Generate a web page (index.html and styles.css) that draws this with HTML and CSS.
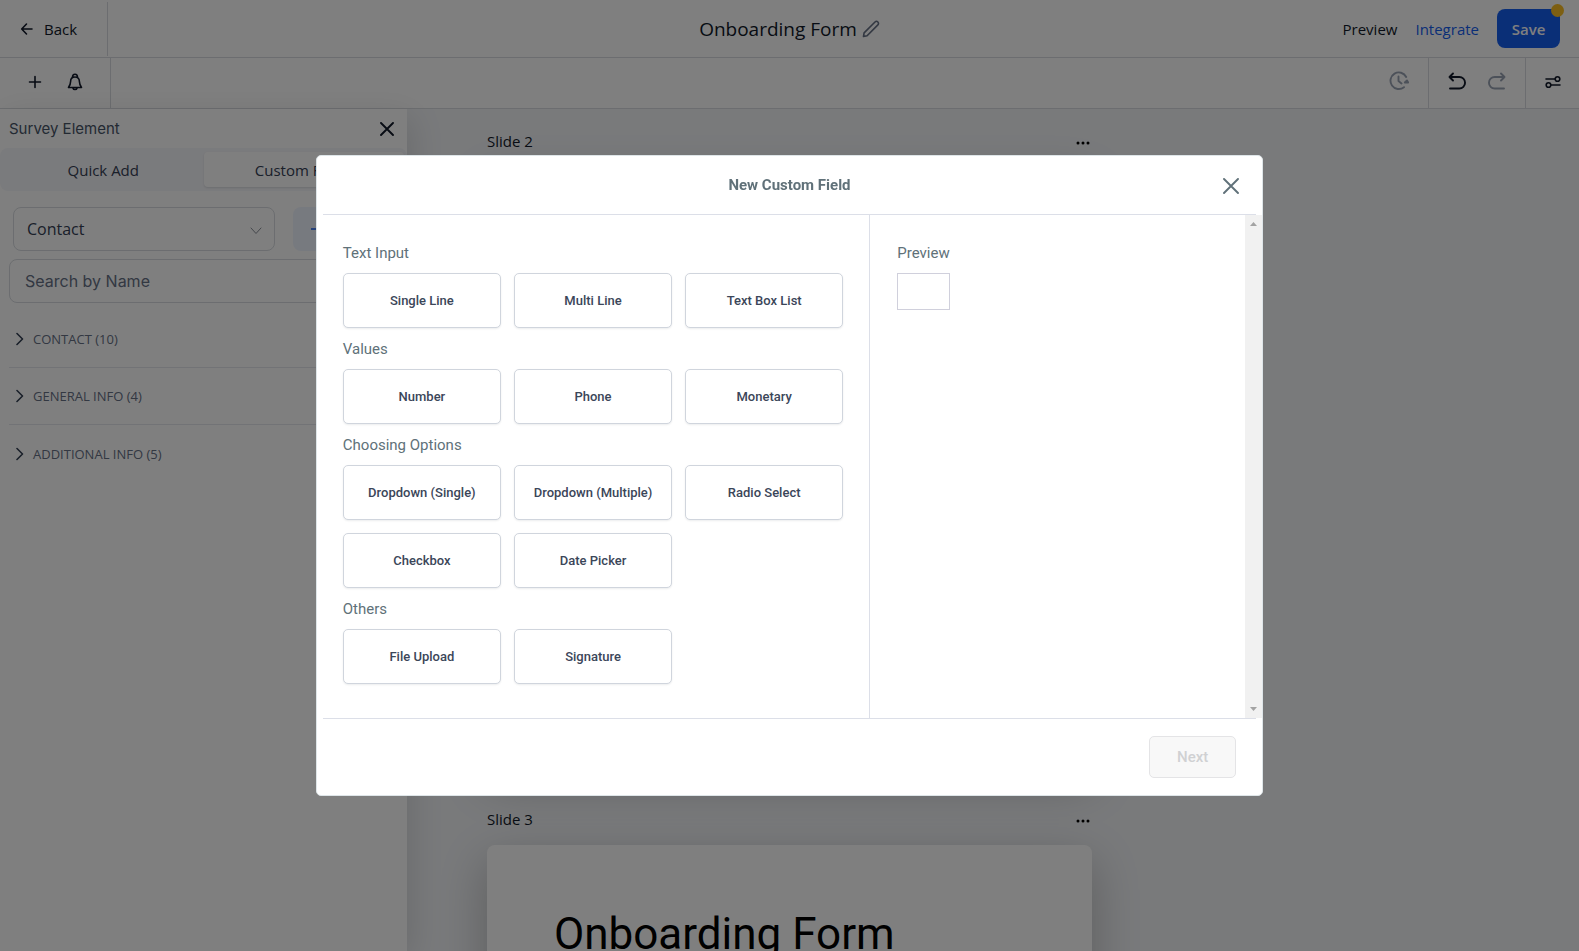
FILE: index.html
```html
<!DOCTYPE html>
<html lang="en">
<head>
<meta charset="utf-8">
<meta name="viewport" content="width=device-width, initial-scale=1">
<title>Onboarding Form</title>
<link rel="stylesheet" href="styles.css">
</head>
<body>
<div class="app">
  <header class="topbar">
    <div class="topbar-left">
      <button class="back" type="button">
        <svg class="icon" width="14" height="14" viewBox="0 0 14 14"><path d="M12 7H2M6.500 2 1.700 7l4.800 5"/></svg>
        Back
      </button>
    </div>
    <div class="topbar-title">
      <h1>Onboarding Form</h1>
      <button class="plain muted" type="button" aria-label="Rename">
        <svg class="icon" width="18" height="18" viewBox="0 0 18 18"><path d="M1.500 16.500l.6-3.600L13 2a2 2 0 0 1 2.900 2.900L5.100 15.800z"/></svg>
      </button>
    </div>
    <div class="topbar-right">
      <a class="link" href="#">Preview</a>
      <a class="link link-blue" href="#">Integrate</a>
      <button class="save" type="button">Save<span class="save-dot"></span></button>
    </div>
  </header>

  <div class="toolbar">
    <div class="tools tools-left">
      <button class="plain" type="button" aria-label="Add">
        <svg class="icon" width="14" height="14" viewBox="0 0 14 14"><path d="M7 1.500v11M1.500 7h11"/></svg>
      </button>
      <button class="plain" type="button" aria-label="Notifications">
        <svg class="icon" width="16" height="18" viewBox="0 0 16 18"><path d="M5.500 4.300C5.500 2.200 6.300 1.200 8 1.200s2.500 1 2.500 3.100M8 4C5 4 3.600 6 3.600 8.500c0 2.600-.8 4-2.100 6h13c-1.300-2-2.100-3.400-2.100-6C12.400 6 11 4 8 4zM6 15.200c.5 1.800 3.500 1.800 4 0"/></svg>
      </button>
    </div>
    <div class="tools tools-right">
      <div class="tool-group">
        <button class="plain faded" type="button" aria-label="Version history">
          <svg class="icon bold" width="20" height="20" viewBox="0 0 20 20"><path d="M15 16.200A8.300 8.300 0 1 1 17.200 6M9.500 5.500V10l3 2.500M15.800 11.500l2.200-2 1.200 2z"/></svg>
        </button>
      </div>
      <div class="tool-group">
        <button class="plain" type="button" aria-label="Undo">
          <svg class="icon bold" width="18" height="18" viewBox="0 0 18 18"><path d="M5 1.500 1.500 5 5 8.500M1.500 5h9.800a5.500 5.500 0 0 1 0 11.500H2"/></svg>
        </button>
        <button class="plain faded" type="button" aria-label="Redo">
          <svg class="icon bold" width="18" height="18" viewBox="0 0 18 18"><path d="M13 1.500 16.500 5 13 8.500M16.500 5H6.700a5.500 5.500 0 0 0 0 11.500H16"/></svg>
        </button>
      </div>
      <div class="tool-group tool-group-end">
        <button class="plain" type="button" aria-label="Settings">
          <svg class="icon" width="16" height="14" viewBox="0 0 16 14"><path d="M1 4h9M6 10h9"/><circle cx="12.500" cy="4" r="2.300"/><circle cx="3.500" cy="10" r="2.300"/></svg>
        </button>
      </div>
    </div>
  </div>

  <div class="workspace">
    <aside class="sidebar">
      <div class="sidebar-head">
        <h2>Survey Element</h2>
        <button class="plain" type="button" aria-label="Close panel">
          <svg class="icon bold" width="14" height="14" viewBox="0 0 14 14"><path d="M1 1l12 12M13 1 1 13"/></svg>
        </button>
      </div>
      <div class="tabs">
        <button class="tab" type="button">Quick Add</button>
        <button class="tab tab-active" type="button">Custom Fields</button>
      </div>
      <div class="filters">
        <div class="select-wrap">
          <select class="select" aria-label="Object"><option>Contact</option></select>
          <svg class="icon thin select-arrow" width="12" height="8" viewBox="0 0 12 8"><path d="M1 1l5 5.500L11 1"/></svg>
        </div>
        <button class="add-field" type="button" aria-label="Add custom field">
          <svg class="icon" width="14" height="14" viewBox="0 0 14 14"><path d="M7 1v12M0 7h14"/></svg>
        </button>
      </div>
      <input class="search" type="text" placeholder="Search by Name" aria-label="Search by Name">
      <div class="groups">
        <button class="group" type="button"><svg class="icon" width="8" height="14" viewBox="0 0 8 14"><path d="M1 1.500 6.500 7 1 12.500"/></svg>CONTACT (10)</button>
        <button class="group" type="button"><svg class="icon" width="8" height="14" viewBox="0 0 8 14"><path d="M1 1.500 6.500 7 1 12.500"/></svg>GENERAL INFO (4)</button>
        <button class="group" type="button"><svg class="icon" width="8" height="14" viewBox="0 0 8 14"><path d="M1 1.500 6.500 7 1 12.500"/></svg>ADDITIONAL INFO (5)</button>
      </div>
    </aside>

    <main class="canvas">
      <section class="slide">
        <div class="slide-head"><h3>Slide 2</h3>
          <button class="plain" type="button" aria-label="Slide 2 menu"><svg width="14" height="4" viewBox="0 0 14 4"><circle cx="2" cy="2" r="1.500"/><circle cx="7" cy="2" r="1.500"/><circle cx="12" cy="2" r="1.500"/></svg></button>
        </div>
        <div class="card"></div>
      </section>
      <section class="slide">
        <div class="slide-head"><h3>Slide 3</h3>
          <button class="plain" type="button" aria-label="Slide 3 menu"><svg width="14" height="4" viewBox="0 0 14 4"><circle cx="2" cy="2" r="1.500"/><circle cx="7" cy="2" r="1.500"/><circle cx="12" cy="2" r="1.500"/></svg></button>
        </div>
        <div class="card"><p class="card-title">Onboarding Form</p></div>
      </section>
    </main>
  </div>
</div>

<div class="overlay">
  <div class="modal" role="dialog" aria-modal="true" aria-labelledby="modal-title">
    <div class="modal-head">
      <h2 id="modal-title">New Custom Field</h2>
      <button class="plain modal-close" type="button" aria-label="Close">
        <svg class="icon bold" width="16" height="16" viewBox="0 0 16 16"><path d="M1 1l14 14M15 1 1 15"/></svg>
      </button>
    </div>
    <div class="modal-body">
      <div class="types">
        <section class="type-group">
          <h3>Text Input</h3>
          <div class="type-grid">
            <button class="type" type="button">Single Line</button>
            <button class="type" type="button">Multi Line</button>
            <button class="type" type="button">Text Box List</button>
          </div>
        </section>
        <section class="type-group">
          <h3>Values</h3>
          <div class="type-grid">
            <button class="type" type="button">Number</button>
            <button class="type" type="button">Phone</button>
            <button class="type" type="button">Monetary</button>
          </div>
        </section>
        <section class="type-group">
          <h3>Choosing Options</h3>
          <div class="type-grid">
            <button class="type" type="button">Dropdown (Single)</button>
            <button class="type" type="button">Dropdown (Multiple)</button>
            <button class="type" type="button">Radio Select</button>
            <button class="type" type="button">Checkbox</button>
            <button class="type" type="button">Date Picker</button>
          </div>
        </section>
        <section class="type-group">
          <h3>Others</h3>
          <div class="type-grid">
            <button class="type" type="button">File Upload</button>
            <button class="type" type="button">Signature</button>
          </div>
        </section>
      </div>
      <div class="preview">
        <div class="preview-content">
          <h3>Preview</h3>
          <div class="preview-box"></div>
        </div>
        <div class="scrollbar" aria-hidden="true">
          <svg width="7" height="4" viewBox="0 0 7 4"><path d="M3.500 0 7 4H0z"/></svg>
          <svg width="7" height="4" viewBox="0 0 7 4"><path d="M3.500 4 0 0h7z"/></svg>
        </div>
      </div>
    </div>
    <div class="modal-foot">
      <button class="next" type="button" disabled>Next</button>
    </div>
  </div>
</div>
</body>
</html>
```

FILE: styles.css
```css
* { box-sizing: border-box; }

body {
  margin: 0;
  font-family: "Open Sans", "Noto Sans", sans-serif;
  font-size: 15px;
  color: #101828;
  background: #fff;
  overflow: hidden;
}

h1, h2, h3, p { margin: 0; font-weight: 400; }

button, input, select { font: inherit; color: inherit; }

.icon {
  fill: none;
  stroke: currentColor;
  stroke-width: 1.6;
  stroke-linecap: round;
  stroke-linejoin: round;
}
.bold { stroke-width: 1.9; }
.thin { stroke-width: 1; }

.plain {
  display: inline-flex;
  padding: 0;
  border: 0;
  background: none;
}
.muted { color: #667085; }
.faded { color: #98a2b3; }

.app {
  display: flex;
  flex-direction: column;
  height: 100vh;
}

/* Top bar */
.topbar {
  display: grid;
  grid-template-columns: 1fr auto 1fr;
  align-items: center;
  height: 58px;
  flex: none;
  border-bottom: 1px solid #d8dbe0;
}
.back {
  display: flex;
  align-items: center;
  gap: 10px;
  width: 108px;
  height: 54px;
  padding: 0 0 0 20px;
  border: 0;
  border-right: 1px solid #d8dbe0;
  background: none;
  font-weight: 500;
}
.topbar-title {
  display: flex;
  align-items: center;
  gap: 5px;
}
.topbar-title h1 {
  font-size: 19px;
  line-height: 28px;
}
.topbar-right {
  display: flex;
  justify-content: flex-end;
  align-items: center;
  gap: 18px;
  padding-right: 19px;
  font-weight: 500;
}
.link { color: inherit; text-decoration: none; }
.link-blue { color: #155eef; }
.save {
  position: relative;
  width: 63px;
  height: 39px;
  padding: 0;
  border: 0;
  border-radius: 8px;
  background: #155eef;
  color: #fff;
  font-weight: 600;
}
.save-dot {
  position: absolute;
  top: -5px;
  right: -4px;
  width: 13px;
  height: 13px;
  border-radius: 50%;
  background: #fbbf24;
}

/* Toolbar */
.toolbar {
  display: flex;
  justify-content: space-between;
  height: 51px;
  flex: none;
  border-bottom: 1px solid #d8dbe0;
}
.tools { display: flex; }
.tools-left {
  align-items: center;
  gap: 25px;
  width: 111px;
  padding: 0 0 2px 28px;
  border-right: 1px solid #d8dbe0;
}
.tool-group {
  display: flex;
  align-items: center;
  gap: 22px;
  padding: 0 19px 4px;
}
.tool-group + .tool-group { border-left: 1px solid #d8dbe0; }
.tool-group-end { padding: 0 18px 2px 19px; }

/* Workspace */
.workspace {
  display: flex;
  flex: 1;
  min-height: 0;
  background: #f2f4f7;
}
.sidebar {
  width: 407px;
  flex: none;
  background: #fff;
  box-shadow: 4px 8px 32px rgba(0, 0, 0, .12);
}
.sidebar-head {
  display: flex;
  justify-content: space-between;
  align-items: center;
  height: 39px;
  padding: 0 13px 0 9px;
}
.sidebar-head h2 {
  font-family: Inter, sans-serif;
  font-size: 15px;
  color: #475467;
}
.tabs {
  display: grid;
  grid-template-columns: 1fr 1fr;
  height: 43px;
  padding: 4px 3px;
  border-radius: 8px;
  background: #f5f6fa;
}
.tab {
  padding: 0;
  border: 0;
  border-radius: 4px;
  background: none;
  color: #344054;
}
.tab-active {
  background: #fff;
  font-weight: 500;
  box-shadow: 0 1px 2px rgba(16, 24, 40, .12);
}
.filters {
  display: flex;
  gap: 18px;
  padding: 16px 10px 8px 13px;
}
.select-wrap { position: relative; width: 262px; }
.select {
  appearance: none;
  width: 100%;
  height: 44px;
  padding: 0 13px;
  border: 1px solid #d8dbe0;
  border-radius: 8px;
  background: #fff;
  font-size: 16px;
  color: #344054;
}
.select-arrow {
  position: absolute;
  right: 13px;
  top: 20px;
  color: #8a8f99;
}
.add-field {
  display: flex;
  align-items: center;
  flex: 1;
  height: 44px;
  padding: 0 18px;
  border: 0;
  border-radius: 8px;
  background: #eff4ff;
  color: #155eef;
}
.search {
  display: block;
  width: calc(100% - 18px);
  height: 44px;
  margin: 0 9px;
  padding: 0 15px;
  border: 1px solid #d8dbe0;
  border-radius: 8px;
  background: #fff;
  font-family: Inter, sans-serif;
  font-size: 16px;
}
.search::placeholder { color: #667085; opacity: 1; }
.groups { padding: 8px 9px; }
.group {
  display: flex;
  align-items: center;
  gap: 9px;
  width: 100%;
  height: 57px;
  padding: 0 0 0 7px;
  border: 0;
  border-bottom: 1px solid #e4e7ec;
  background: none;
  font-size: 13px;
  font-weight: 500;
  color: #667085;
}
.group:last-child { border-bottom: 0; }
.group .icon { color: #344054; }

/* Slides */
.canvas {
  flex: 1;
  min-width: 0;
  padding-left: 80px;
  overflow: hidden;
}
.slide { max-width: 605px; }
.slide-head {
  display: flex;
  justify-content: space-between;
  align-items: center;
  height: 58px;
  padding: 9px 2px 0 0;
}
.slide-head h3 {
  padding-bottom: 3px;
  font-size: 15px;
  font-weight: 500;
}
.card {
  height: 600px;
  margin-bottom: 20px;
  padding: 62px 67px;
  border-radius: 8px;
  background: #fff;
  box-shadow: 0 16px 48px rgba(0, 0, 0, .24);
}
.card-title {
  font-family: Roboto, sans-serif;
  font-size: 44px;
  line-height: 54px;
  color: #000;
}

/* Dialog */
.overlay {
  position: fixed;
  inset: 0;
  display: flex;
  align-items: center;
  justify-content: center;
  background: rgba(0, 0, 0, .5);
}
.modal {
  width: 60%;
  border: 1px solid #dee5e8;
  border-radius: 5px;
  background: #fff;
  font-family: Roboto, sans-serif;
  color: #607179;
}
.modal-head {
  position: relative;
  display: flex;
  align-items: center;
  justify-content: center;
  height: 59px;
  margin: 0 6px;
  border-bottom: 1px solid #dcdfe8;
}
.modal-head h2 { font-size: 15px; font-weight: 700; }
.modal-close {
  position: absolute;
  right: 17px;
  top: 22px;
}
.modal-body {
  display: grid;
  grid-template-columns: calc(100% * 7 / 12 + 1px) 1fr;
}
.modal-body h3 {
  margin-bottom: 10px;
  font-size: 15px;
  line-height: 20px;
}
.types { padding: 28px 26px 34px; }
.type-group + .type-group { margin-top: 11px; }
.type-grid {
  display: grid;
  grid-template-columns: repeat(3, 1fr);
  gap: 13px;
}
.type {
  height: 55px;
  padding: 0;
  border: 1px solid #d0d5dd;
  border-radius: 5px;
  background: #fff;
  box-shadow: 0 1px 2px rgba(16, 24, 40, .08);
  font-size: 13px;
  font-weight: 500;
  color: #3b4659;
}
.preview {
  display: flex;
  justify-content: space-between;
  border-left: 1px solid #dcdfe8;
}
.preview-content { padding: 28px 27px; }
.preview-box {
  height: 37px;
  border: 1px solid #d0d0dc;
}
.scrollbar {
  display: flex;
  flex-direction: column;
  justify-content: space-between;
  align-items: center;
  width: 17px;
  padding: 7px 0;
  background: #f1f1f1;
  fill: #a3a3a3;
}
.modal-foot {
  display: flex;
  justify-content: flex-end;
  margin: 0 6px;
  padding: 17px 20px;
  border-top: 1px solid #dcdfe8;
}
.next {
  width: 87px;
  height: 42px;
  border: 1px solid #e4e4e6;
  border-radius: 5px;
  background: #f8f8f8;
  font-size: 15px;
  font-weight: 500;
  color: #d0d1d3;
}
```
